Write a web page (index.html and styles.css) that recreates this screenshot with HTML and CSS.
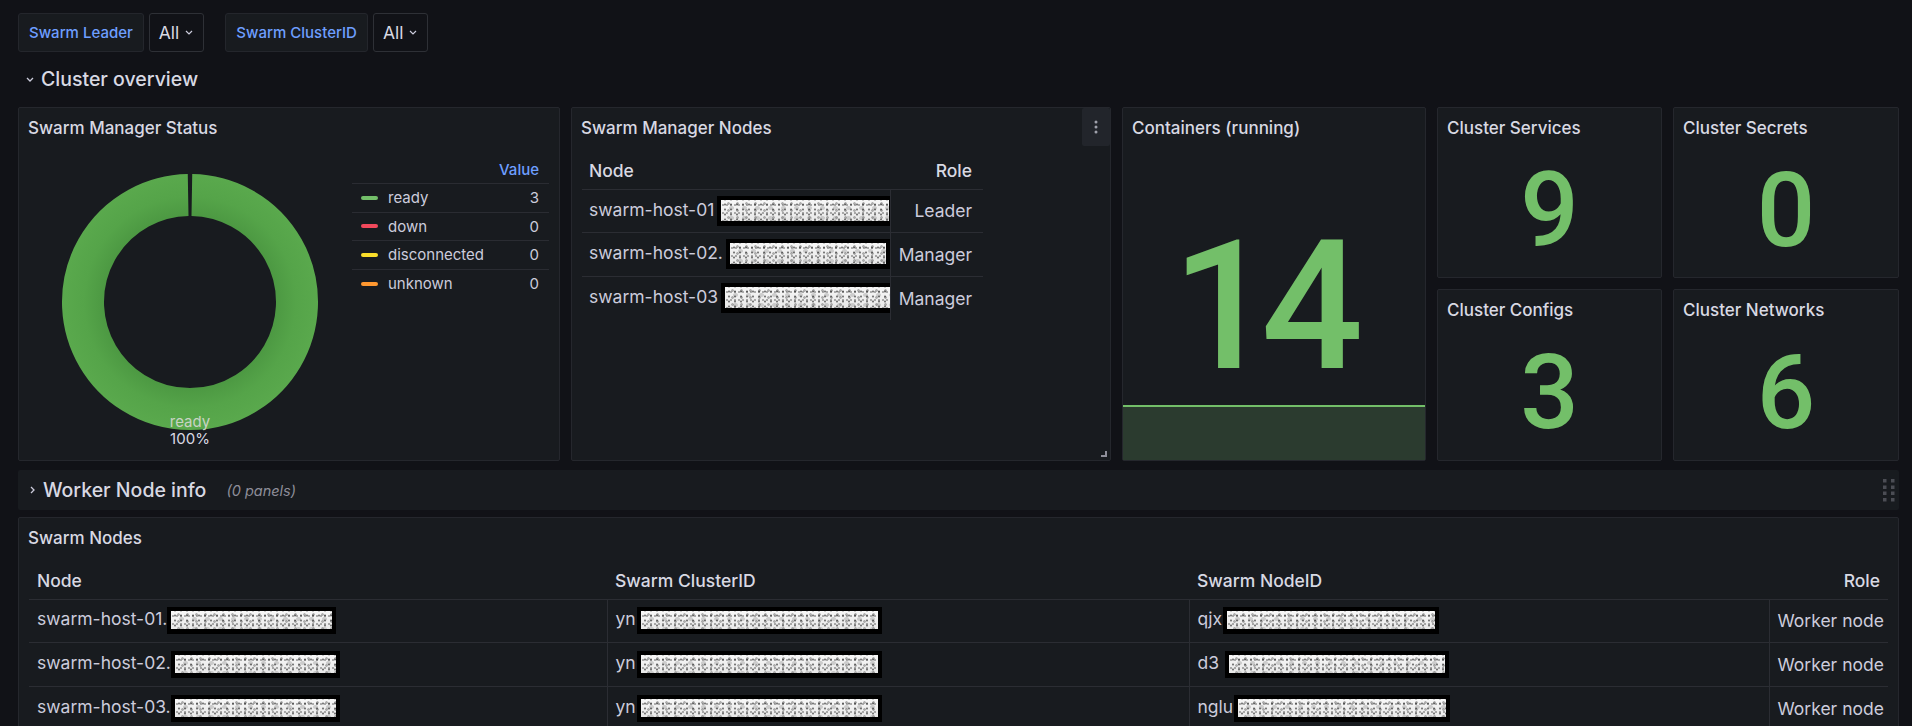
FILE: index.html
```html
<!DOCTYPE html>
<html lang="en">
<head>
  <meta charset="UTF-8" />
  <meta name="viewport" content="width=device-width, initial-scale=1.0"/>
  <title>Docker Swarm</title>
  <link rel="stylesheet" href="styles.css">
</head>
<body>
  <div class="dashboard">

    <div class="filters">
      <div class="filter">
        <span class="filter-label">Swarm Leader</span>
        <span class="filter-value">All
          <svg class="caret" viewBox="0 0 8 5"><path d="M1 1l3 3 3-3" /></svg>
        </span>
      </div>
      <div class="filter">
        <span class="filter-label">Swarm ClusterID</span>
        <span class="filter-value">All
          <svg class="caret" viewBox="0 0 8 5"><path d="M1 1l3 3 3-3" /></svg>
        </span>
      </div>
    </div>

    <div class="row-header">
      <svg class="row-chevron" viewBox="0 0 8 5"><path d="M1 1l3 3 3-3" /></svg>
      <span class="row-title">Cluster overview</span>
    </div>

    <div class="overview-grid">

      <section class="panel status-panel">
        <div class="panel-header"><h3>Swarm Manager Status</h3></div>
        <div class="panel-body status-body">
          <div class="donut-area">
            <svg class="donut" width="260" height="286" viewBox="0 0 260 286">
              <defs>
                <radialGradient id="ringFill" gradientUnits="userSpaceOnUse" cx="130" cy="138" r="129">
                  <stop offset="0.66" stop-color="#4c9842" />
                  <stop offset="0.82" stop-color="#55a449" />
                  <stop offset="1" stop-color="#5aa94d" />
                </radialGradient>
              </defs>
              <path d="M131.87 31.02 A107 107 0 1 1 128.13 31.02" fill="none" stroke="url(#ringFill)" stroke-width="42" />
              <text class="donut-name" x="130" y="263" text-anchor="middle">ready</text>
              <text class="donut-pct" x="130" y="280" text-anchor="middle">100%</text>
            </svg>
          </div>

          <div class="legend">
            <div class="legend-head">Value</div>
            <div class="legend-row"><span class="swatch ready"></span><span class="legend-name">ready</span><span class="legend-val">3</span></div>
            <div class="legend-row"><span class="swatch down"></span><span class="legend-name">down</span><span class="legend-val">0</span></div>
            <div class="legend-row"><span class="swatch disconnected"></span><span class="legend-name">disconnected</span><span class="legend-val">0</span></div>
            <div class="legend-row"><span class="swatch unknown"></span><span class="legend-name">unknown</span><span class="legend-val">0</span></div>
          </div>
        </div>
      </section>

      <section class="panel nodes-panel">
        <div class="panel-header">
          <h3>Swarm Manager Nodes</h3>
          <button class="menu-btn" aria-label="Menu">
            <svg viewBox="0 0 4 16"><circle cx="2" cy="3" r="1.5" /><circle cx="2" cy="8" r="1.5" /><circle cx="2" cy="13" r="1.5" /></svg>
          </button>
        </div>
        <table class="data-table managers">
          <colgroup><col class="col-node"><col class="col-role"></colgroup>
          <thead>
            <tr><th>Node</th><th class="right">Role</th></tr>
          </thead>
          <tbody>
            <tr><td>swarm-host-01<span class="redact host"></span></td><td class="right">Leader</td></tr>
            <tr><td>swarm-host-02.<span class="redact host short"></span></td><td class="right">Manager</td></tr>
            <tr><td>swarm-host-03<span class="redact host"></span></td><td class="right">Manager</td></tr>
          </tbody>
        </table>
        <span class="resize-handle"></span>
      </section>

      <section class="panel stat stat-big">
        <div class="panel-header"><h3>Containers (running)</h3></div>
        <div class="panel-body stat-body">
          <div class="sparkline"></div>
          <span class="stat-value">14</span>
        </div>
      </section>

      <section class="panel stat">
        <div class="panel-header"><h3>Cluster Services</h3></div>
        <div class="panel-body stat-body"><span class="stat-value">9</span></div>
      </section>

      <section class="panel stat">
        <div class="panel-header"><h3>Cluster Secrets</h3></div>
        <div class="panel-body stat-body"><span class="stat-value">0</span></div>
      </section>

      <section class="panel stat">
        <div class="panel-header"><h3>Cluster Configs</h3></div>
        <div class="panel-body stat-body"><span class="stat-value">3</span></div>
      </section>

      <section class="panel stat">
        <div class="panel-header"><h3>Cluster Networks</h3></div>
        <div class="panel-body stat-body"><span class="stat-value">6</span></div>
      </section>

    </div>

    <div class="row-header collapsed">
      <svg class="row-chevron right" viewBox="0 0 5 8"><path d="M1 1l3 3-3 3" /></svg>
      <span class="row-title">Worker Node info</span>
      <span class="row-count">(0 panels)</span>
      <svg class="drag-handle" viewBox="0 0 12 24">
        <rect x="0" y="1" width="3.5" height="3.5" /><rect x="8" y="1" width="3.5" height="3.5" />
        <rect x="0" y="7.5" width="3.5" height="3.5" /><rect x="8" y="7.5" width="3.5" height="3.5" />
        <rect x="0" y="13.5" width="3.5" height="3.5" /><rect x="8" y="13.5" width="3.5" height="3.5" />
        <rect x="0" y="20" width="3.5" height="3.5" /><rect x="8" y="20" width="3.5" height="3.5" />
      </svg>
    </div>

    <section class="panel swarm-nodes">
      <div class="panel-header"><h3>Swarm Nodes</h3></div>
      <table class="data-table workers">
        <colgroup><col class="col-a"><col class="col-b"><col class="col-c"><col class="col-d"></colgroup>
        <thead>
          <tr><th>Node</th><th>Swarm ClusterID</th><th>Swarm NodeID</th><th class="right">Role</th></tr>
        </thead>
        <tbody>
          <tr>
            <td>swarm-host-01.<span class="redact worker"></span></td>
            <td>yn<span class="redact cluster"></span></td>
            <td>qjx<span class="redact nodeid"></span></td>
            <td class="right">Worker node</td>
          </tr>
          <tr>
            <td>swarm-host-02.<span class="redact worker"></span></td>
            <td>yn<span class="redact cluster"></span></td>
            <td>d3 <span class="redact nodeid wide"></span></td>
            <td class="right">Worker node</td>
          </tr>
          <tr>
            <td>swarm-host-03.<span class="redact worker"></span></td>
            <td>yn<span class="redact cluster"></span></td>
            <td>nglu<span class="redact nodeid"></span></td>
            <td class="right">Worker node</td>
          </tr>
        </tbody>
      </table>
    </section>

  </div>
</body>
</html>
```

FILE: styles.css
```css
* {
  box-sizing: border-box;
  margin: 0;
  padding: 0;
}

body {
  background-color: #111217;
  color: #ccccdc;
  font-family: Inter, 'Noto Sans', sans-serif;
  width: 1912px;
  height: 726px;
  overflow: hidden;
}

.dashboard {
  padding: 13px 13px 0 18px;
}

/* variable pickers */
.filters {
  display: flex;
  gap: 21px;
  height: 39px;
}

.filter {
  display: flex;
  gap: 5px;
}

.filter-label {
  display: flex;
  align-items: center;
  padding: 0 10px;
  background-color: #181b1f;
  border: 1px solid #24262c;
  border-radius: 3px;
  color: #6e9fff;
  font-size: 15px;
  font-weight: 500;
}

.filter-value {
  display: flex;
  align-items: center;
  gap: 6px;
  padding: 0 10px 0 9px;
  border: 1px solid #2e3036;
  border-radius: 3px;
  font-size: 17.5px;
  color: #d8d9e3;
}

.caret {
  width: 8px;
  height: 5px;
  fill: none;
  stroke: #ccccdc;
  stroke-width: 1.2;
}

/* dashboard rows */
.row-header {
  display: flex;
  align-items: center;
  height: 38px;
  margin: 8px 0 9px;
  padding-left: 8px;
}

.row-chevron {
  width: 8px;
  height: 5px;
  margin-right: 7px;
  fill: none;
  stroke: #ccccdc;
  stroke-width: 1.3;
}

.row-chevron.right {
  width: 5px;
  height: 8px;
  margin: 0 8px 0 4px;
}

.row-title {
  font-size: 19.5px;
  font-weight: 500;
  color: #d8d9e3;
}

.row-header.collapsed {
  height: 40px;
  margin: 9px 0 7px;
  background-color: #181b1f;
  border-radius: 2px;
  padding-right: 4px;
}

.row-count {
  margin-left: 20px;
  font-size: 14.5px;
  font-style: italic;
  color: #8e8e99;
}

.drag-handle {
  margin-left: auto;
  width: 12px;
  height: 24px;
  fill: #4b4d54;
}

/* panels */
.overview-grid {
  display: grid;
  grid-template-columns: 542px 540px 304px 225px 226px;
  grid-template-rows: 171px 172px;
  gap: 11px;
}

.panel {
  position: relative;
  display: flex;
  flex-direction: column;
  background-color: #181b1f;
  border: 1px solid #25272d;
  border-radius: 2px;
}

.status-panel,
.nodes-panel,
.stat-big {
  grid-row: span 2;
}

.panel-header {
  display: flex;
  align-items: center;
  height: 40px;
  padding: 0 9px;
  flex-shrink: 0;
}

.panel-header h3 {
  font-size: 17px;
  font-weight: 500;
  color: #d8d9e3;
}

.panel-body {
  flex: 1;
}

/* pie chart */
.status-body {
  display: flex;
}

.donut-area {
  flex: 1;
  display: flex;
  justify-content: center;
  align-items: flex-start;
  padding: 16px 0 0 9px;
}

.donut-name {
  font-size: 15px;
  fill: #c9d3c4;
}

.donut-pct {
  font-size: 15px;
  fill: #d8d9e3;
}

.legend {
  width: 197px;
  margin: 8px 10px 0 0;
  font-size: 15px;
}

.legend-head {
  height: 28px;
  line-height: 28px;
  text-align: right;
  padding-right: 10px;
  color: #6e9fff;
  font-weight: 500;
  border-bottom: 1px solid #2a2c32;
}

.legend-row {
  display: flex;
  align-items: center;
  height: 28.5px;
  padding: 0 10px 0 9px;
  border-bottom: 1px solid #2a2c32;
}

.legend-row:last-child {
  border-bottom: none;
}

.swatch {
  width: 17px;
  height: 4px;
  border-radius: 2px;
  margin-right: 10px;
}

.swatch.ready { background-color: #73bf69; }
.swatch.down { background-color: #f2495c; }
.swatch.disconnected { background-color: #fade2a; }
.swatch.unknown { background-color: #ff9830; }

.legend-val {
  margin-left: auto;
}

/* tables */
.data-table {
  border-collapse: collapse;
  table-layout: fixed;
  font-size: 17.5px;
  margin: 4px 0 0 10px;
}

.data-table th {
  height: 37px;
  padding: 0 7px;
  text-align: left;
  font-weight: 500;
  color: #d8d9e3;
  border-bottom: 1px solid #2b2d33;
}

.data-table td {
  height: 43.5px;
  padding: 0 7px;
  white-space: nowrap;
  overflow: hidden;
  border-bottom: 1px solid #2b2d33;
}

.data-table td + td {
  border-left: 1px solid #2b2d33;
}

.data-table tbody tr:last-child td {
  border-bottom: none;
}

.data-table .right {
  text-align: right;
  padding-right: 11px;
}

.managers {
  width: 401px;
}

.managers .col-node { width: 308px; }
.managers .col-role { width: 93px; }

.workers {
  width: 1859px;
}

.workers th,
.workers td {
  padding-left: 8px;
}

.workers .right {
  padding-right: 8px;
}

.workers .col-a { width: 578px; }
.workers .col-b { width: 582px; }
.workers .col-c { width: 580px; }
.workers .col-d { width: 119px; }

/* redacted hostnames / ids */
.redact {
  display: inline-block;
  vertical-align: middle;
  height: 30px;
  margin-left: 3px;
  border: 4px solid #000;
  border-bottom-width: 5px;
  background:
    radial-gradient(circle, rgba(40,40,40,0.6) 0 0.8px, transparent 1.3px) 1px 2px / 6px 5px,
    radial-gradient(circle, rgba(120,120,120,0.55) 0 1.1px, transparent 1.6px) 3px 0 / 9px 7px,
    radial-gradient(circle, rgba(80,80,80,0.45) 0 0.7px, transparent 1.2px) 0 1px / 4px 8px,
    radial-gradient(ellipse, rgba(160,160,160,0.45) 0 2px, transparent 3px) 4px 3px / 13px 10px,
    linear-gradient(#f7f7f7, #e8e8e8);
}

.redact.host { width: 176px; }
.redact.host.short { width: 164px; }
.redact.worker { width: 169px; height: 27px; margin-left: 0; }
.redact.cluster { width: 245px; height: 27px; margin-left: 1px; }
.redact.nodeid { width: 216px; height: 27px; margin-left: 1px; }
.redact.nodeid.wide { width: 224px; }

/* panel chrome */
.menu-btn {
  position: absolute;
  top: 0;
  right: 0;
  width: 28px;
  height: 38px;
  background-color: #22252b;
  border: none;
  border-radius: 2px;
  display: flex;
  align-items: center;
  justify-content: center;
}

.menu-btn svg {
  width: 4px;
  height: 16px;
  fill: #9fa1ab;
}

.resize-handle {
  position: absolute;
  right: 3px;
  bottom: 3px;
  width: 6px;
  height: 6px;
  border-right: 2px solid #8e8e99;
  border-bottom: 2px solid #8e8e99;
}

/* stats */
.stat-body {
  position: relative;
  display: flex;
  align-items: center;
  justify-content: center;
  padding-bottom: 5px;
  overflow: hidden;
}

.stat-value {
  position: relative;
  font-family: Roboto, 'Liberation Sans', sans-serif;
  font-size: 103px;
  font-weight: 500;
  line-height: 1;
  color: #73bf69;
}

.stat-big .stat-body {
  padding: 6px 0 0;
}

.stat-big .stat-value {
  font-size: 180px;
  letter-spacing: -13px;
  margin-right: 26px;
}

.sparkline {
  position: absolute;
  left: 0;
  right: 0;
  bottom: 0;
  height: 55px;
  background-color: #2b3b2f;
  border-top: 2px solid #73bf69;
}

.swarm-nodes {
  height: 260px;
}
```
